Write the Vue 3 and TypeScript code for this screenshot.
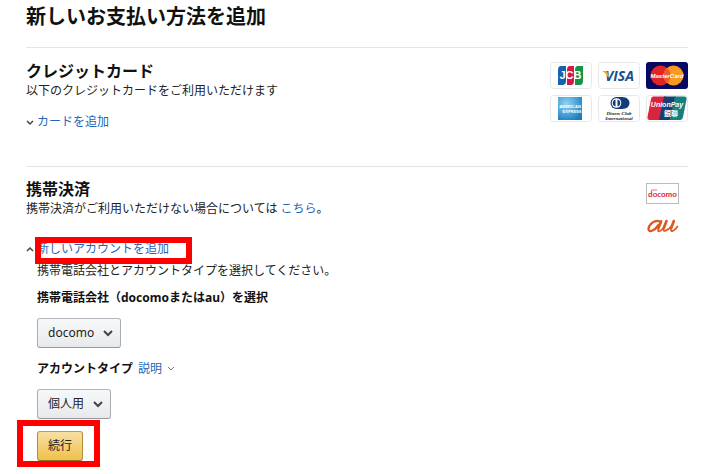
<script setup lang="ts">
import { ref } from 'vue'

const cardOpen = ref<boolean>(false)
const accountOpen = ref<boolean>(true)
const carriers: string[] = ['docomo', 'au']
const accountTypes: string[] = ['個人用']
const carrier = ref<string>('docomo')
const accountType = ref<string>('個人用')
</script>

<template>
  <main class="page">
    <h1>新しいお支払い方法を追加</h1>

    <section class="method">
      <div class="info">
        <h2>クレジットカード</h2>
        <p>以下のクレジットカードをご利用いただけます</p>
        <div class="expander">
          <svg class="chev" viewBox="0 0 8 8" aria-hidden="true"><path d="M1 3 4 6 7 3" /></svg>
          <a href="#card" @click.prevent="cardOpen = !cardOpen">カードを追加</a>
        </div>
      </div>
      <div class="cards">
        <svg viewBox="0 0 42 27" role="img" aria-label="JCB">
          <rect class="plate" x=".5" y=".5" width="41" height="26" rx="3" />
          <path d="M11 4h5v15q0 4-4 4H8V8q0-4 3-4z" fill="#1762ad" />
          <path d="M20 4h4v15q0 4-3 4h-4V8q0-4 3-4z" fill="#d41745" />
          <path d="M28 4h5v15q0 4-3 4h-5V8q0-4 3-4z" fill="#159447" />
          <text x="20.5" y="17" text-anchor="middle" font-size="11" font-weight="700" fill="#fff">JCB</text>
        </svg>
        <svg viewBox="0 0 42 27" role="img" aria-label="VISA">
          <rect class="plate" x=".5" y=".5" width="41" height="26" rx="3" />
          <text x="21.500" y="19" text-anchor="middle" font-size="14" font-weight="700" font-style="italic" fill="#174f91" class="visa">VISA</text>
          <path d="M4 9h5l2 5-1 1.500Q8 10.500 4 9z" fill="#efa51d" />
        </svg>
        <svg viewBox="0 0 42 27" role="img" aria-label="MasterCard">
          <rect width="42" height="27" rx="3" fill="#050960" />
          <circle cx="14.500" cy="13.500" r="10" fill="#df2525" />
          <circle cx="27.500" cy="13.500" r="10" fill="#f99a20" />
          <path d="M21 5.900a10 10 0 0 1 0 15.200 10 10 0 0 1 0-15.200z" fill="#ee5b24" />
          <text x="21" y="16" text-anchor="middle" font-size="6" font-weight="700" font-style="italic" fill="#fff">MasterCard</text>
        </svg>
        <svg viewBox="0 0 42 27" role="img" aria-label="American Express">
          <defs>
            <radialGradient id="amex" cx=".35" cy=".3" r=".8"><stop stop-color="#91d4f2" /><stop offset="1" stop-color="#187cc0" /></radialGradient>
          </defs>
          <rect class="plate" x=".5" y=".5" width="41" height="26" rx="3" />
          <rect x="8" y="2" width="24" height="23" fill="url(#amex)" />
          <text x="20" y="13" text-anchor="middle" font-size="4" font-weight="700" fill="#fff">AMERICAN</text>
          <text x="22" y="18" text-anchor="middle" font-size="4" font-weight="700" fill="#fff">EXPRESS</text>
        </svg>
        <svg viewBox="0 0 42 27" role="img" aria-label="Diners Club International">
          <rect class="plate" x=".5" y=".5" width="41" height="26" rx="3" />
          <path d="M18 2h6c10 0 10 12 0 12h-6z" fill="#143d77" />
          <circle cx="18.500" cy="8" r="6" fill="#143d77" />
          <circle cx="18.500" cy="8" r="4.800" fill="#fff" />
          <path d="M17.500 4.500a3.600 3.600 0 0 0 0 7zM19.500 4.500a3.600 3.600 0 0 1 0 7z" fill="#143d77" />
          <text x="21" y="20" text-anchor="middle" font-size="5" font-weight="700" font-style="italic" fill="#222" class="serif">Diners Club</text>
          <text x="21" y="25" text-anchor="middle" font-size="5" font-weight="700" font-style="italic" fill="#222" class="serif">International</text>
        </svg>
        <svg viewBox="0 0 42 27" role="img" aria-label="UnionPay 銀聯">
          <rect class="plate" x=".5" y=".5" width="41" height="26" rx="3" />
          <path d="M7 1.500h13l-5 23.500H4q-3 0-2.500-3L5 4q.5-2.500 2-2.500z" fill="#d9243d" />
          <path d="M18 1.500h12L25 25H13z" fill="#173f74" />
          <path d="M29 1.500h9q3 0 2.500 3L37 22q-.6 3-3 3H23.500z" fill="#15807c" />
          <text x="21" y="12" text-anchor="middle" font-size="7" font-weight="700" font-style="italic" fill="#fff">UnionPay</text>
          <text x="25" y="21" text-anchor="middle" font-size="7" font-weight="700" fill="#fff" class="cjk">銀聯</text>
        </svg>
      </div>
    </section>

    <section class="method mobile">
      <div class="info">
        <h2>携帯決済</h2>
        <p>携帯決済がご利用いただけない場合については <a href="#help">こちら</a>。</p>
        <div class="expander account">
          <svg class="chev" viewBox="0 0 8 8" aria-hidden="true"><path d="M1 6 4 3 7 6" /></svg>
          <a class="marked" href="#account" @click.prevent="accountOpen = !accountOpen">新しいアカウントを追加</a>
        </div>
        <form v-if="accountOpen" @submit.prevent>
          <p>携帯電話会社とアカウントタイプを選択してください。</p>
          <label class="carrier-label" for="carrier">携帯電話会社（docomoまたはau）を選択</label>
          <div class="picker">
            <select id="carrier" v-model="carrier">
              <option v-for="c in carriers" :key="c" :value="c">{{ c }}</option>
            </select>
            <svg viewBox="0 0 10 8" aria-hidden="true"><path d="M1 2 5 6 9 2" /></svg>
          </div>
          <div class="type-row">
            <label for="type">アカウントタイプ</label>
            <a href="#about">説明</a>
            <svg class="chev thin" viewBox="0 0 8 8" aria-hidden="true"><path d="M1 2 4 5 7 2" /></svg>
          </div>
          <div class="picker">
            <select id="type" v-model="accountType">
              <option v-for="t in accountTypes" :key="t" :value="t">{{ t }}</option>
            </select>
            <svg viewBox="0 0 10 8" aria-hidden="true"><path d="M1 2 5 6 9 2" /></svg>
          </div>
          <div class="submit"><button type="submit">続行</button></div>
        </form>
      </div>
      <div class="carriers">
        <svg class="docomo" viewBox="0 0 33 21" role="img" aria-label="docomo">
          <rect x=".5" y=".5" width="32" height="20" fill="#fff" stroke="#bbb" />
          <text x="16.500" y="14" text-anchor="middle" font-size="8" font-weight="700" fill="#d7263a" class="round">docomo</text>
          <path d="M5 7h6" stroke="#e46a77" />
        </svg>
        <svg class="au" viewBox="0 0 33 16" role="img" aria-label="au" fill="none" stroke="#dc5a20" stroke-linecap="round" stroke-linejoin="round">
          <path d="M15.500 3 12.300 11c-1 3.500 1.500 3 4.700-.5L20.500 3 17.500 10.500c-1 4 4 2.500 8-2.500M28 3l-3 7.500c-1 4 2.500 3.500 6.500-2" stroke-width="1.700" />
          <path d="M14.500 4C9 .5 2.500 7 2.500 11c0 4 6 2 10-4" stroke-width="2.300" />
          <path d="M15 3.500 12.500 10M20.500 3 17.800 10M27.800 3 25.200 10" stroke-width="2.600" />
        </svg>
      </div>
    </section>
  </main>
</template>

<style>
body {
  margin: 0;
  background: #fff;
}
</style>

<style scoped>
.page {
  padding: 2px 32px 6px 26px;
  font-family: "Noto Sans", "Noto Sans CJK JP", sans-serif;
  font-size: 12px;
  line-height: 20px;
  color: #222;
}
h1, h2, p {
  margin: 0;
}
h1 {
  padding-bottom: 15px;
  font-size: 20px;
  line-height: 30px;
  color: #111;
}
h2 {
  font-size: 16px;
  line-height: 20px;
  color: #111;
}
a {
  color: #1f66b8;
  text-decoration: none;
}
.method {
  display: flex;
  justify-content: space-between;
  align-items: flex-start;
  border-top: 1px solid #e4e4e4;
  padding-top: 13px;
  min-height: 105px;
}
.mobile {
  padding-top: 12px;
}
.expander {
  display: flex;
  align-items: center;
  gap: 3px;
  margin-top: 11px;
}
.account {
  margin-top: 20px;
}
.chev {
  width: 8px;
  height: 8px;
  fill: none;
  stroke: #444;
  stroke-width: 1.5;
}
.thin {
  stroke: #777;
  stroke-width: 1;
}
.marked {
  position: relative;
}
.marked::after {
  content: "";
  position: absolute;
  inset: -2px -23px -5px -2px;
  border: 6px solid #f00;
}
form {
  padding: 2px 0 0 11px;
}
label {
  font-weight: 700;
  color: #111;
}
.carrier-label {
  display: block;
  padding: 7px 0 10px;
}
.picker {
  position: relative;
  width: fit-content;
}
select, button {
  box-sizing: border-box;
  display: block;
  height: 30px;
  font: inherit;
  color: #222;
  border: 1px solid #adb1b8;
  border-radius: 3px;
}
select {
  appearance: none;
  field-sizing: content;
  padding: 0 26px 0 10px;
  border-color: #b2b6bc #a8acb3 #94989f;
  background: linear-gradient(#f7f8fa, #e7e9ec);
}
.picker svg {
  position: absolute;
  right: 8px;
  top: 11px;
  width: 10px;
  height: 8px;
  fill: none;
  stroke: #444;
  stroke-width: 2;
  pointer-events: none;
}
.type-row {
  display: flex;
  align-items: center;
  gap: 5px;
  padding: 11px 0 10px;
}
.submit {
  position: relative;
  width: fit-content;
  margin-top: 12px;
}
.submit::after {
  content: "";
  position: absolute;
  inset: -11px -17px -6px -20px;
  border: 6px solid #f00;
  pointer-events: none;
}
button {
  padding: 0 10px;
  border-color: #c19c50 #b18b3e #91702c;
  background: linear-gradient(#f7dfa5, #f0c14b);
}
.cards {
  display: grid;
  grid-template-columns: repeat(3, 42px);
  gap: 6px;
  padding-top: 1px;
  font-family: "Liberation Sans", sans-serif;
}
.cards svg {
  display: block;
  width: 42px;
  height: 27px;
}
.plate {
  fill: #fff;
  stroke: #e7e9e9;
}
.visa {
  font-family: "Open Sans", sans-serif;
}
.serif {
  font-family: "Liberation Serif", serif;
}
.cjk {
  font-family: "Noto Sans CJK JP", sans-serif;
}
.round {
  font-family: Lato, sans-serif;
}
.carriers {
  display: flex;
  flex-direction: column;
  gap: 14px;
  width: 42px;
  padding-top: 4px;
}
.docomo {
  width: 33px;
  height: 21px;
}
.au {
  width: 33px;
  height: 16px;
}
</style>
